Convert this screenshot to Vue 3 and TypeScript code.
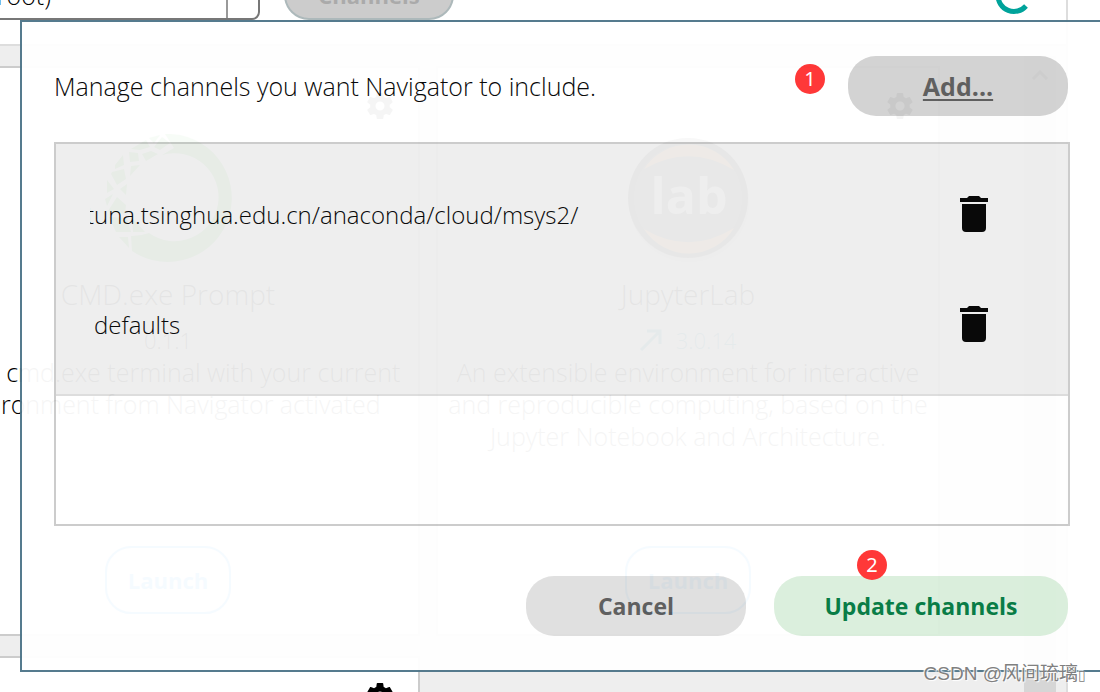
<script setup lang="ts">
import { ref } from 'vue'

interface Tile {
  name: string
  version: string
  outdated: boolean
  logo: 'anaconda' | 'lab'
  lines: string[]
}

const tiles: Tile[] = [
  {
    name: 'CMD.exe Prompt',
    version: '0.1.1',
    outdated: false,
    logo: 'anaconda',
    lines: ['Run a cmd.exe terminal with your current', 'environment from Navigator activated'],
  },
  {
    name: 'JupyterLab',
    version: '3.0.14',
    outdated: true,
    logo: 'lab',
    lines: ['An extensible environment for interactive', 'and reproducible computing, based on the', 'Jupyter Notebook and Architecture.'],
  },
]

const channels = ref([
  { url: 'tuna.tsinghua.edu.cn/anaconda/cloud/msys2/', scrolled: true },
  { url: 'defaults', scrolled: false },
])

const gear =
  'M19.4 13c.04-.32.07-.65.07-1s-.03-.68-.07-1l2.1-1.65c.2-.15.25-.42.13-.64l-2-3.46c-.12-.22-.39-.3-.61-.22l-2.49 1c-.52-.4-1.08-.73-1.69-.98l-.38-2.65A.49.49 0 0 0 14 2h-4c-.25 0-.46.18-.49.42l-.38 2.65c-.61.25-1.17.59-1.69.98l-2.49-1c-.23-.09-.49 0-.61.22l-2 3.46c-.13.22-.07.49.12.64L4.57 11c-.04.32-.07.65-.07 1s.03.68.07 1l-2.11 1.65c-.19.15-.24.42-.12.64l2 3.46c.12.22.39.3.61.22l2.49-1c.52.4 1.08.73 1.69.98l.38 2.65c.03.24.24.42.49.42h4c.25 0 .46-.18.49-.42l.38-2.65c.61-.25 1.17-.59 1.69-.98l2.49 1c.23.09.49 0 .61-.22l2-3.46c.12-.22.07-.49-.12-.64zM12 15.5a3.5 3.5 0 1 1 0-7 3.5 3.5 0 0 1 0 7z'

function remove(index: number) {
  channels.value.splice(index, 1)
}
</script>

<template>
  <div class="app">
    <div class="window">
      <header class="toolbar">
        <select class="env" aria-label="Environment">
          <option>base (root)</option>
        </select>
        <button class="channels" type="button" disabled>Channels</button>
        <svg class="spinner" width="40" height="40" viewBox="0 0 40 40" aria-hidden="true">
          <path d="M6 15A16 16 0 0 0 34 26" fill="none" stroke="#00a39b" stroke-width="5" />
        </svg>
      </header>

      <main class="content">
        <div class="grid">
          <article v-for="tile in tiles" :key="tile.name" class="tile">
            <button class="gear" type="button" :aria-label="`${tile.name} options`">
              <svg viewBox="2 2 20 20"><path :d="gear" /></svg>
            </button>
            <svg v-if="tile.logo === 'anaconda'" class="logo" viewBox="0 0 128 128">
              <path d="M61 0A64 64 0 1 1 28 117L27 102A50 50 0 0 0 45 99A44 44 0 1 0 58 21L70 14Z" fill="#43c03a" />
              <path
                d="M45 4L56 1L50 9ZM27 15L42 6L46 13L36 16ZM58 3L66 9L56 16L50 13ZM38 20L47 17L54 20L42 27ZM25 18L34 19L35 27L26 28ZM11 31L19 21L20 31L11 35ZM27 32L36 31L26 42ZM8 38L20 35L22 45L13 51L7 40ZM3 46L10 55L3 59ZM16 55L23 50L22 61ZM1 65L9 60L3 72ZM13 63L22 71L21 80L4 77ZM5 83L23 84L27 98L12 98ZM28 84L41 98L29 98ZM15 103L24 103L25 114Z"
                fill="#43c03a"
              />
            </svg>
            <svg v-else class="logo" viewBox="0 0 128 128">
              <circle cx="65" cy="68" r="60" fill="#d8d8d8" />
              <circle cx="64" cy="64" r="60" fill="#4e4e4e" />
              <circle cx="64" cy="64" r="54" fill="#5e5e5e" />
              <path d="M20 35A53 53 0 0 1 110 36Q65 9 20 35Z" fill="#ffa04a" />
              <path d="M20 95A53 53 0 0 0 110 94Q65 122 20 95Z" fill="#ffa04a" />
              <text x="65" y="80" text-anchor="middle">lab</text>
            </svg>
            <h2>{{ tile.name }}</h2>
            <p class="version" :class="{ outdated: tile.outdated }">
              <svg v-if="tile.outdated" width="22" height="22" viewBox="0 0 22 22">
                <path d="M1 21L19 3M7 2H20V15" fill="none" stroke="currentColor" stroke-width="3" />
              </svg>
              {{ tile.version }}
            </p>
            <p class="about"><span v-for="line in tile.lines" :key="line">{{ line }}</span></p>
            <button class="launch" type="button">Launch</button>
          </article>
          <article class="tile">
            <button class="gear" type="button" aria-label="Options">
              <svg viewBox="2 2 20 20"><path :d="gear" /></svg>
            </button>
          </article>
        </div>
        <div class="scrollbar">
          <svg width="18" height="10" viewBox="0 0 18 10"><path d="M2 9L9 2L16 9" fill="none" stroke="#555" stroke-width="3" /></svg>
        </div>
      </main>
    </div>

    <section class="dialog" role="dialog" aria-label="Manage channels">
      <div class="head">
        <p>Manage channels you want Navigator to include.</p>
        <div class="step-host">
          <button class="pill add" type="button">Add...</button>
          <span class="step step-add">1</span>
        </div>
      </div>
      <div class="list">
        <ul>
          <li v-for="(channel, i) in channels" :key="channel.url">
            <span class="url"><span :class="{ scrolled: channel.scrolled }">{{ channel.url }}</span></span>
            <button class="trash" type="button" :aria-label="`Remove ${channel.url}`" @click="remove(i)">
              <svg width="28" height="36" viewBox="0 0 28 36">
                <path d="M7 2L9 0H19L21 2H28V6H0V2ZM2 8H26V32Q26 36 22 36H6Q2 36 2 32Z" />
              </svg>
            </button>
          </li>
        </ul>
      </div>
      <div class="foot">
        <button class="pill cancel" type="button">Cancel</button>
        <div class="step-host">
          <button class="pill update" type="button">Update channels</button>
          <span class="step step-update">2</span>
        </div>
      </div>
    </section>

    <div class="credit">CSDN @风间琉璃<span>▯</span></div>
  </div>
</template>

<style>
body {
  margin: 0;
}
</style>

<style scoped>
.app {
  position: relative;
  height: 100vh;
  overflow: hidden;
  background: #fff;
  color: #000;
  font-family: 'Open Sans', 'Noto Sans', sans-serif;
  font-weight: 300;
  font-size: 25px;
}
.app * {
  box-sizing: border-box;
}
p,
h2,
ul {
  margin: 0;
  padding: 0;
}
button,
select {
  font: inherit;
  color: inherit;
}
.window {
  display: flex;
  flex-direction: column;
  height: 100%;
  margin-right: 32px;
  border-right: 2px solid #ddd;
}
.toolbar {
  display: flex;
  flex: none;
  align-items: flex-end;
  gap: 24px;
  height: 46px;
  padding-bottom: 24px;
  padding-right: 34px;
  border-bottom: 2px solid #ddd;
}
.env {
  appearance: none;
  flex: none;
  width: 360px;
  height: 50px;
  margin-left: -100px;
  padding: 0 0 0 28px;
  border: 2px solid #777;
  border-radius: 8px;
  background: linear-gradient(#999, #999) right 30px top / 2px 100% no-repeat #fff;
}
.channels {
  width: 170px;
  height: 50px;
  padding: 0;
  border: 2px solid #adb9bb;
  border-radius: 25px;
  background: #ccc;
  color: #aaa;
  font-size: 22px;
  font-weight: 700;
}
.spinner {
  margin-left: auto;
}
.content {
  display: flex;
  flex: 1;
  min-height: 0;
  overflow: hidden;
  background: #eee;
}
.grid {
  display: grid;
  flex: 1;
  grid-template-columns: repeat(2, 504px);
  grid-auto-rows: 570px;
  gap: 20px 16px;
  margin-left: -84px;
  padding-top: 20px;
}
.tile {
  display: flex;
  flex-direction: column;
  align-items: center;
  padding: 25px 25px 20px;
  border: 2px solid #ccc;
  background: #fff;
  text-align: center;
  white-space: nowrap;
}
.gear {
  align-self: flex-end;
  width: 26px;
  height: 26px;
  padding: 0;
  border: 0;
  background: none;
}
.gear svg {
  display: block;
}
.logo {
  flex: none;
  width: 128px;
  height: 128px;
  margin: 15px 0 14px;
}
.logo text {
  fill: #fff;
  font-size: 50px;
  font-weight: 700;
}
h2 {
  font-size: 28px;
  font-weight: 300;
  line-height: 36px;
}
.version {
  display: flex;
  align-items: center;
  gap: 14px;
  margin-top: 12px;
  font-size: 22px;
  line-height: 32px;
}
.outdated {
  color: #0f8fae;
}
.about {
  line-height: 32px;
}
.about span {
  display: block;
}
.launch {
  width: 126px;
  height: 68px;
  margin-top: auto;
  padding: 0;
  border: 2px solid #0a9bff;
  border-radius: 26px;
  background: #fff;
  color: #0a9bff;
  font-size: 22px;
  font-weight: 700;
}
.scrollbar {
  flex: none;
  width: 32px;
  margin: 10px 10px 0 0;
  padding-top: 8px;
  background: #d6d6d6;
  text-align: center;
}
.scrollbar svg {
  display: block;
  margin: 6px auto;
}
.dialog {
  position: absolute;
  top: 20px;
  left: 20px;
  right: 0;
  padding: 34px 30px 34px 32px;
  border: 2px solid #4f768a;
  border-right: 0;
  background: #fff;
  opacity: 0.96;
}
.head,
.foot {
  display: flex;
  align-items: center;
  padding-right: 2px;
}
.head {
  justify-content: space-between;
}
.foot {
  justify-content: flex-end;
  gap: 28px;
}
.step-host {
  position: relative;
}
.pill {
  display: block;
  height: 60px;
  padding: 0;
  border: 0;
  border-radius: 28px;
  font-size: 23px;
  font-weight: 700;
}
.add,
.cancel {
  width: 220px;
  color: #5a5a5a;
}
.add {
  background: #d2d2d2;
  font-size: 25px;
  text-decoration: underline;
  text-decoration-thickness: 2px;
  text-underline-offset: 3px;
}
.cancel {
  background: #dfdfdf;
}
.update {
  width: 294px;
  background: #daefdc;
  color: #007840;
}
.step {
  position: absolute;
  width: 30px;
  height: 30px;
  border-radius: 50%;
  background: #ff3030;
  color: #fff;
  font-family: 'Noto Sans', sans-serif;
  font-size: 20px;
  font-weight: 400;
  line-height: 29px;
  text-align: center;
}
.step-add {
  top: 8px;
  left: -53px;
}
.step-update {
  top: -26px;
  left: 83px;
}
.list {
  min-height: 384px;
  margin: 26px 0 50px;
  border: 2px solid #cacaca;
}
ul {
  padding: 15px 0;
  border-bottom: 2px solid #dcdcdc;
  background: #eee;
  list-style: none;
}
li {
  display: flex;
  align-items: center;
  height: 110px;
  padding: 0 76px 0 34px;
}
.url {
  flex: 1;
  overflow: hidden;
  font-size: 24px;
  white-space: nowrap;
}
.url span {
  margin-left: 4px;
}
.url .scrolled {
  margin-left: -4px;
}
.trash {
  display: flex;
  justify-content: center;
  width: 36px;
  padding: 0;
  border: 0;
  background: none;
}
.credit {
  position: absolute;
  right: 14px;
  bottom: 2px;
  color: #808080;
  font-family: 'Liberation Sans', 'Noto Sans CJK SC', sans-serif;
  font-size: 19px;
  font-weight: 400;
  line-height: 30px;
  text-shadow: 1px 1px 1px #fff, -1px -1px 1px #fff;
}
.credit span {
  font-size: 14px;
}
</style>
